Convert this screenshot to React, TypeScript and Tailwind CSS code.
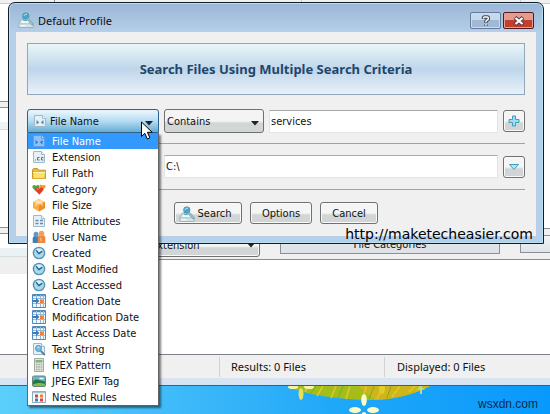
import { useState } from "react"
import type { ReactNode } from "react"

const ui = "font-['DejaVu_Sans_Condensed','DejaVu_Sans',sans-serif] [font-stretch:condensed]"
const caption = "font-['Noto_Sans','Open_Sans',sans-serif] [font-stretch:normal]"

function Svg({ children, className = "h-[14px] w-[14px]" }: { children: ReactNode; className?: string }) {
  return (
    <svg viewBox="0 0 14 14" className={`shrink-0 ${className}`} aria-hidden="true">
      {children}
    </svg>
  )
}

function PageIcon({ kind, faded }: { kind: "name" | "ext" | "attr" | "text"; faded?: boolean }) {
  return (
    <Svg>
      <path d="M1.5 1.5h8l3 3v8h-11z" fill={faded ? "#8fc0f3" : "#e6f0f7"} stroke={faded ? "#5d9fe6" : "#9fb9cc"} />
      <path d="M9.5 1.5v3h3" fill={faded ? "#b4d6f8" : "#fff"} stroke={faded ? "#5d9fe6" : "#9fb9cc"} />
      {kind === "name" && (
        <path d="M3.500 6v4.500L6.200 8.200zM10.500 6v4.500L7.800 8.200z" fill={faded ? "#2f7ad0" : "#6288a8"} />
      )}
      {kind === "ext" && (
        <path d="M3 10h1M7.5 7.5h-2v2.5h2M11.5 7.5h-2v2.5h2" fill="none" stroke="#4f7594" />
      )}
      {kind === "attr" && (
        <path d="M3.5 6.5h3M8 6.5h3M3.5 9.5h3M8 9.5h3" fill="none" stroke="#668aaa" strokeWidth="1.3" />
      )}
      {kind === "text" && (
        <>
          <circle cx="6.5" cy="6.5" r="3" fill="#78bddf" stroke="#4f91b5" />
          <path d="M5.3 5.8l1.2-1 .8 1" fill="none" stroke="#eaf8ff" />
          <path d="M8.8 9l4 4" stroke="#5c7e96" strokeWidth="1.8" />
        </>
      )}
    </Svg>
  )
}

function FolderIcon() {
  return (
    <Svg>
      <path d="M.5 12.5V3.5l1-1h4l1.5 1.7h6.500v8.3z" fill="#e9bd34" stroke="#c79827" />
      <path d="M1 5.500h12.500l-.8 7H1z" fill="#fbe16c" stroke="#d3a72b" strokeWidth=".7" />
      <path d="M1.500 6.500h11.300" stroke="#fff5b2" />
    </Svg>
  )
}

function HeartsIcon() {
  return (
    <Svg>
      <path d="M4 9.500L.7 6C-.5 4 2 1.800 4 4c2-2.200 4.500 0 3.300 2z" fill="#4ca53d" />
      <path d="M10.500 8.500L7.700 5.200C6.700 3 9 2 10.500 3.500c1.700-1.500 4 0 2.800 2z" fill="#f39b28" />
      <path d="M7.300 12.800L3.500 8.500c-1.200-2.500 2-4.200 3.800-2 1.800-2.200 5-.5 3.800 2z" fill="#dd4125" />
      <path d="M4.800 7.400c.3-.8 1.200-.8 1.700-.2" stroke="#ff9e7e" fill="none" />
    </Svg>
  )
}

function BoxIcon() {
  return (
    <Svg>
      <path d="M7 1l6 3v6l-6 3.500L1 10V4z" fill="#f8ab45" />
      <path d="M7 1l6 3-6 3-6-3z" fill="#ffcd7c" />
      <path d="M7 7l6-3v6l-6 3.500z" fill="#ee8b2b" />
      <path d="M4 2.500l6 3v2.300M10 2.500L4 5.500V8" fill="none" stroke="#fff0c5" strokeWidth="1" />
    </Svg>
  )
}

function UsersIcon() {
  return (
    <Svg>
      <path d="M.7 13V8.500C.7 6.500 2 6 4 6s3 .7 3 2.500V13z" fill="#3f80b7" />
      <circle cx="4" cy="4.300" r="2.500" fill="#5c9acb" />
      <path d="M5.800 13V7.500C5.800 5.400 7.400 5 9.500 5s3.800.8 3.800 2.500V13z" fill="#ee8541" />
      <circle cx="9.500" cy="3.600" r="2.800" fill="#f3a05c" />
      <path d="M8 8.500h1v3" stroke="#ffc694" fill="none" />
    </Svg>
  )
}

function ClockIcon() {
  return (
    <Svg>
      <circle cx="7" cy="7" r="6.300" fill="#5793b4" />
      <circle cx="7" cy="7" r="4.900" fill="#a8d8ec" />
      <path d="M2.700 6a4.500 4.500 0 018.600 0z" fill="#d7f0f9" />
      <path d="M4 4.200L7 7.600l3.300-2.500" fill="none" stroke="#24638c" strokeWidth="1.400" />
    </Svg>
  )
}

function DateIcon() {
  return (
    <Svg>
      <path d="M.5.500h13v13H.500z" fill="#f2f8fc" stroke="#4c8ac0" />
      <path d="M1 1.500h12" stroke="#4c8ac0" strokeWidth="1.500" />
      <path d="M4.500 1v12M8.500 1v12M11.500 1v12M1 4.500h12M1 9.500h12" stroke="#94b9d9" />
      <path d="M1 6h3V4l3.500 3L4 10V8H1z" fill="#347cba" />
      <path d="M8 5.500h3.500V9H8z" fill="#ef8139" />
    </Svg>
  )
}

function CalcIcon() {
  return (
    <Svg>
      <path d="M2.500.500h9v13h-9z" fill="#e2e6df" stroke="#a1aaa1" />
      <path d="M3.500 2h7v2.500h-7z" fill="#83b67b" />
      <path d="M4 6.500h1.500M6.300 6.500h1.500M8.700 6.500h1.500M4 9h1.500M6.300 9h1.500M8.700 9h1.500M4 11.500h1.500M6.300 11.500h1.500M8.700 11.500h1.500" stroke="#a2aaa1" strokeWidth="1.300" />
    </Svg>
  )
}

function PhotoIcon() {
  return (
    <Svg>
      <rect x=".5" y="2" width="13" height="10.500" rx="1.500" fill="#69b6d8" stroke="#64866e" />
      <path d="M1 7.500c3-3.500 5-1.500 12 0V11q0 1-1 1H2q-1 0-1-1z" fill="#267642" />
      <path d="M1 10.500c4-2 8-2 12-.5V11q0 1-1 1H2q-1 0-1-1z" fill="#83ba58" />
      <path d="M7.500 4.500h4" stroke="#ebf8fc" strokeWidth="1.500" />
    </Svg>
  )
}

function RulesIcon() {
  return (
    <Svg>
      <path d="M.5 1.500h13v11H.500z" fill="#f7fafc" stroke="#8ea8bf" />
      <path d="M1 2.500h12" stroke="#a7c2d9" strokeWidth="1.500" />
      <path d="M3 4.500h3v3H3z" fill="#d54332" />
      <path d="M8 4.500h3v3H8z" fill="#ed7e35" />
      <path d="M3 8.500h3v3H3z" fill="#3c7dc1" />
      <path d="M8 8.500h3v3H8z" fill="#e04335" />
    </Svg>
  )
}

function FinderIcon({ className }: { className: string }) {
  return (
    <svg viewBox="0 0 16 16" className={`shrink-0 ${className}`} aria-hidden="true">
      <path d="M.8 11.500L3.500 7h7l4.700 4.500v4H.8z" fill="#d3e4e4" stroke="#8eadb2" strokeWidth=".8" />
      <path d="M1 11.800h14" stroke="#a3bec2" strokeWidth=".8" />
      <path d="M3 11l1.500-3h5l1.500 3z" fill="#f3f9f8" />
      <path d="M2.500 13.800h5" stroke="#fff" />
      <circle cx="7.800" cy="4" r="3.200" fill="#4ba6cb" stroke="#4791ae" strokeWidth=".8" />
      <path d="M6 3.800c.4-1.600 2-2 3-1.300" stroke="#c5edf8" fill="none" />
      <path d="M4.500 7.500c2 1.500 4.500 1 6-.5" stroke="#5fb3d2" strokeWidth="1.500" fill="none" />
      <path d="M10 7.200l4.300 4.800" stroke="#7aa8b6" strokeWidth="2.600" strokeLinecap="round" />
      <path d="M10 7.200l4 4.500" stroke="#b4d2d8" strokeLinecap="round" />
    </svg>
  )
}

function DownArrow({ className = "" }: { className?: string }) {
  return (
    <svg viewBox="0 0 8 5" className={`pointer-events-none h-[5px] w-2 ${className}`} aria-hidden="true">
      <path d="M0 0h8L4 4.500z" fill="#222" />
    </svg>
  )
}

const criteria: { label: string; icon: ReactNode }[] = [
  { label: "File Name", icon: <PageIcon kind="name" faded /> },
  { label: "Extension", icon: <PageIcon kind="ext" /> },
  { label: "Full Path", icon: <FolderIcon /> },
  { label: "Category", icon: <HeartsIcon /> },
  { label: "File Size", icon: <BoxIcon /> },
  { label: "File Attributes", icon: <PageIcon kind="attr" /> },
  { label: "User Name", icon: <UsersIcon /> },
  { label: "Created", icon: <ClockIcon /> },
  { label: "Last Modified", icon: <ClockIcon /> },
  { label: "Last Accessed", icon: <ClockIcon /> },
  { label: "Creation Date", icon: <DateIcon /> },
  { label: "Modification Date", icon: <DateIcon /> },
  { label: "Last Access Date", icon: <DateIcon /> },
  { label: "Text String", icon: <PageIcon kind="text" /> },
  { label: "HEX Pattern", icon: <CalcIcon /> },
  { label: "JPEG EXIF Tag", icon: <PhotoIcon /> },
  { label: "Nested Rules", icon: <RulesIcon /> },
]

const button =
  "flex h-[22px] items-center justify-center rounded-[3px] border border-[#707070] bg-linear-to-b from-[#f4f5f4] from-50% to-[#d2d5d5] to-60% shadow-[inset_0_0_0_1px_#f8f9f9]"
const field =
  "h-[23px] w-full min-w-0 border border-[#e0e5ea] border-t-[#a5a8ad] bg-white px-px outline-none"

function MainWindow() {
  return (
    <section className="flex flex-1 flex-col border-b border-[#4b5a68] bg-[#eff0ef]" aria-label="Search results">
      <div className="flex flex-1">
        <div className="flex w-[140px] shrink-0 flex-col">
          <div className="h-1 border-b border-[#c9cccd]">
            <span className="ml-auto block h-full w-[86px] border-l border-[#8c9196]" />
          </div>
          <div className="h-[97px] bg-white" />
          <div className="h-[7px] border-y border-[#8c9196]" />
          <div className="h-[14px] bg-white" />
          <div className="h-2 border-b border-[#d5dde0] bg-[#eef3f5]" />
          <div className="h-[97px] bg-white" />
          <div className="h-[7px] border-y border-[#8c9196]" />
          <div className="h-[14px] bg-white" />
          <div className="h-[9px] border-b border-[#d5dde0] bg-[#eaf2f6]" />
          <div className="h-[17px] bg-[#efefef]" />
          <div className="flex-1 bg-white" />
        </div>
        <div className="flex min-w-0 flex-1 flex-col">
          <div className="flex h-1 border-b border-[#c9cccd]">
            <span className="w-[162px] border-r border-[#c9cccd]" />
            <span className="w-[219px] border-r border-[#c9cccd]" />
          </div>
          <div className="h-[224px] bg-white" />
          <div className="flex h-8 items-start gap-5 overflow-hidden border-y border-[#868b90] pt-[6px]">
            <div className="relative w-[120px] shrink-0">
              <select aria-label="Group by" className={`${button} w-full appearance-none pl-[10px] text-[11px]`}>
                <option>Extension</option>
              </select>
              <DownArrow className="absolute right-[5px] top-[8px]" />
            </div>
            <button type="button" className="h-[19px] flex-1 border border-[#8a9097] bg-linear-to-b from-[#f2f4f6] to-[#dfe3e7] to-60%">
              File Categories
            </button>
            <div className="h-[18px] w-[30px] shrink-0 border border-r-0 border-[#8a9097] bg-linear-to-b from-[#f2f4f6] to-[#dfe3e7]" />
          </div>
          <div className="flex-1 bg-white" />
        </div>
      </div>
      <footer className={`flex h-6 shrink-0 items-center border-t border-[#7d8288] ${caption}`}>
        <span className="h-5 w-[40%] border-r border-[#d0d2d3]" />
        <span className="w-[30%] border-r border-[#d0d2d3] pl-[11px] leading-5">Results: 0 Files</span>
        <span className="pl-3 leading-5">Displayed: 0 Files</span>
      </footer>
      <div className="h-[7px] shrink-0 bg-[#d9e4f3]" />
    </section>
  )
}

function Wallpaper() {
  return (
    <footer className="relative h-7 shrink-0 overflow-hidden bg-linear-to-r from-[#5bcffb] via-[#20a8f8] via-60% to-[#0799fc]">
      <svg viewBox="0 0 160 28" className="mx-auto h-7 w-40 translate-x-[83px]" aria-hidden="true">
        <path d="M10 0h142c-15 8-35 14-60 14S25 9 10 0z" fill="#a4bd1b" />
        <path d="M80 0h72c-15 8-35 13-55 14z" fill="#cdb51b" />
        <path d="M30 0l-3 6M45 0l-6 10M58 0l-5 12M72 0l-4 13M88 0l-3 14M105 0l-6 13M122 0l-8 11M137 0l-6 6" stroke="#dfc82c" strokeWidth="1.500" />
        <path d="M38 0l-5 7M65 0l-5 12M96 0l-5 13M113 0l-4 12" stroke="#6fae26" />
        <g fill="#f3f4a6">
          <ellipse cx="15" cy="1" rx="5" ry="2" />
          <ellipse cx="31" cy="1" rx="5" ry="2" />
          <ellipse cx="23" cy="8" rx="2.500" ry="6" fill="#e5df62" />
          <ellipse cx="104" cy="3" rx="3" ry="5" fill="#e6cc25" />
          <path d="M141 0h3v2l4 1-4 1v4h-2V4l-4-1 3-1z" fill="#b9dc87" />
        </g>
        <g fill="#fbfbc5">
          <ellipse cx="86" cy="14" rx="2.800" ry="6" />
          <ellipse cx="77" cy="24" rx="6" ry="3" />
          <ellipse cx="95" cy="24" rx="6" ry="3" />
          <ellipse cx="86" cy="29" rx="2.500" ry="3" />
        </g>
      </svg>
      <span className="absolute bottom-0 right-3 font-['Liberation_Sans',Arial,sans-serif] text-[12px] leading-5 text-[#0c2a4a]">
        wsxdn.com
      </span>
    </footer>
  )
}

function CriteriaPicker() {
  const [value, setValue] = useState("File Name")

  return (
    <div className="relative">
      <select
        aria-label="Search criterion"
        value={value}
        onChange={(e) => setValue(e.target.value)}
        className="h-[24px] w-full appearance-none rounded-t-[3px] border border-[#2c628b] bg-linear-to-b from-[#e4f3fb] from-10% via-[#b4dcf3] via-50% to-[#65acd2] pl-[22px] pt-[2px] outline-none"
      >
        {criteria.map((c) => (
          <option key={c.label}>{c.label}</option>
        ))}
      </select>
      <span className="pointer-events-none absolute left-[6px] top-[5px]">
        <PageIcon kind="name" />
      </span>
      <DownArrow className="absolute right-[6px] top-3" />
      <ul
        role="listbox"
        aria-label="Search criteria"
        className="absolute inset-x-0 top-full z-10 border border-t-0 border-[#646464] bg-white shadow-[2px_2px_2px_rgba(0,0,0,0.5)]"
      >
        {criteria.map((c) => (
          <li
            key={c.label}
            role="option"
            aria-selected={c.label === value}
            onClick={() => setValue(c.label)}
            className="flex h-4 items-center gap-[6px] whitespace-nowrap pl-1 aria-selected:bg-[#3399ff] aria-selected:text-white"
          >
            {c.icon}
            <span className="pt-[2px] leading-[14px]">{c.label}</span>
          </li>
        ))}
      </ul>
      <svg viewBox="0 0 12 19" className="pointer-events-none absolute right-[6px] top-3 z-20 h-[19px] w-3" aria-hidden="true">
        <path d="M.5 1v14.500l3.300-3.200 2.500 5.700 2.600-1.100-2.500-5.600h4.800z" fill="#fff" stroke="#000" />
      </svg>
    </div>
  )
}

function ProfileDialog() {
  return (
    <section
      role="dialog"
      aria-label="Default Profile"
      className="absolute left-2 right-[6px] top-[2px] rounded-t-[7px] border border-[#0d2027] bg-linear-to-b from-[#9ab6d5] to-[#b6d0ea] to-[30px] px-[7px] pb-[7px] shadow-[inset_0_0_0_1px_#b9dff0]"
    >
      <header className="flex h-[29px] items-center">
        <FinderIcon className="ml-[2px] mt-1 h-4 w-4" />
        <h1 className={`ml-1 mt-[6px] flex-1 leading-4 ${caption}`}>Default Profile</h1>
        <button
          type="button"
          aria-label="Help"
          className="mr-[2px] mt-[6px] flex h-[17px] w-[31px] items-center justify-center rounded-[2px] border border-[#64799a] bg-linear-to-b from-[#c6d8ec] from-50% to-[#9fb9d6] to-50% shadow-[inset_0_0_0_1px_#cbdcef]"
        >
          <svg viewBox="0 0 10 12" className="h-3 w-[10px]" fill="none" aria-hidden="true">
            <path d="M2.500 4V3q0-1 1-1h2.800q1 0 1 1v1.200L5 6v2M5 9.500v1.500" stroke="#3d4655" strokeWidth="3.400" />
            <path d="M2.500 3.600V3q0-1 1-1h2.800q1 0 1 1v1.200L5 6v1.500M5 9.200v1.500" stroke="#fff" strokeWidth="1.500" />
          </svg>
        </button>
        <button
          type="button"
          aria-label="Close"
          className="mr-[2px] mt-[6px] flex h-[17px] w-[31px] items-center justify-center rounded-[2px] border border-[#54191c] bg-linear-to-b from-[#e49b8e] from-50% to-[#c2402b] to-50% shadow-[inset_0_0_0_1px_#e3a195]"
        >
          <svg viewBox="0 0 12 10" className="h-[10px] w-3" fill="none" aria-hidden="true">
            <path d="M2 1.500l8 7M10 1.500l-8 7" stroke="#553a3e" strokeWidth="4" />
            <path d="M2.500 2l7 6M9.500 2l-7 6" stroke="#fff" strokeWidth="2.300" />
          </svg>
        </button>
      </header>

      <form className="bg-[#eff0ef] px-[11px] pb-3 pt-[11px]" onSubmit={(e) => e.preventDefault()}>
        <h2 className={`flex h-[52px] items-center justify-center border border-[#8fa9bb] bg-linear-to-b from-[#e8f6f7] via-[#bfd6ea] via-50% to-[#e8f1fa] text-[13px] font-bold text-[#22466b] ${caption}`}>
          Search Files Using Multiple Search Criteria
        </h2>

        <div className="mt-[14px] grid grid-cols-[132px_100px_minmax(0,1fr)_22px] items-center gap-x-[5px]">
          <CriteriaPicker />
          <div className="relative">
            <select
              aria-label="Condition"
              className="h-6 w-full appearance-none rounded-[3px] border border-[#707070] bg-linear-to-b from-[#f3f4f3] from-50% to-[#d3d6d6] to-60% pl-[2px] pt-[2px] outline-none"
            >
              <option>Contains</option>
            </select>
            <DownArrow className="absolute right-[5px] top-3" />
          </div>
          <input aria-label="Search text" defaultValue="services" className={field} />
          <button type="button" aria-label="Add criterion" className={button}>
            <svg viewBox="0 0 12 12" className="h-3 w-3" aria-hidden="true">
              <path d="M4.500 1h3v3.500H11v3H7.500V11h-3V7.500H1v-3h3.500z" fill="#a5dcec" stroke="#3d9fc0" />
            </svg>
          </button>
        </div>

        <hr className="mb-[11px] mt-[10px] border-[#a0a3a3]" />

        <div className="grid grid-cols-[132px_minmax(0,1fr)_22px] items-center gap-x-[5px]">
          <span />
          <input aria-label="Search path" defaultValue="C:\" className={field} />
          <button type="button" aria-label="Choose path" className={button}>
            <svg viewBox="0 0 12 12" className="h-3 w-3" aria-hidden="true">
              <path d="M1.500 3.500h9L6 8.500z" fill="#b8e3ef" stroke="#3d9fc0" />
            </svg>
          </button>
        </div>

        <hr className="mb-3 mt-[11px] border-[#a0a3a3]" />

        <div className="flex justify-center gap-2">
          <button type="submit" className={`${button} w-[68px] gap-[3px] pr-[6px] pt-[2px]`}>
            <FinderIcon className="h-4 w-4" />
            Search
          </button>
          <button type="button" className={`${button} w-[62px] pt-[2px]`}>
            Options
          </button>
          <button type="button" className={`${button} w-[58px] pt-[2px]`}>
            Cancel
          </button>
        </div>
      </form>
      <a
        href="http://maketecheasier.com"
        className="absolute -bottom-px right-[10px] font-['DejaVu_Sans',sans-serif] text-[14px] leading-5 text-black [font-stretch:normal]"
      >
        http://maketecheasier.com
      </a>
    </section>
  )
}

export default function App() {
  return (
    <main className={`relative flex min-h-screen flex-col overflow-hidden text-[11px] leading-4 text-[#111] ${ui}`}>
      <MainWindow />
      <Wallpaper />
      <ProfileDialog />
    </main>
  )
}
